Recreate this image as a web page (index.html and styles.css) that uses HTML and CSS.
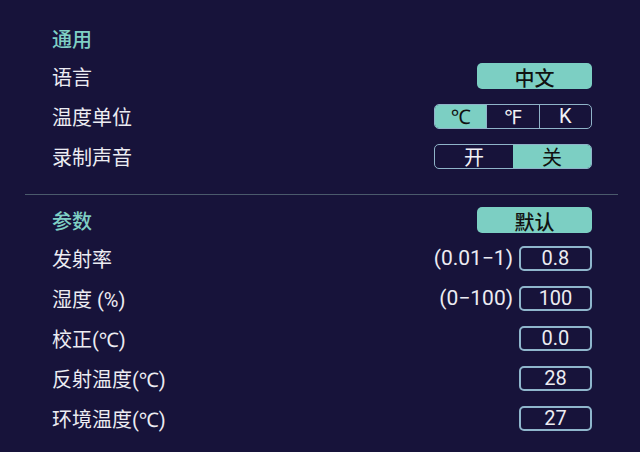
FILE: index.html
```html
<!DOCTYPE html>
<html lang="zh-CN">
<head>
    <meta charset="UTF-8">
    <meta name="viewport" content="width=device-width, initial-scale=1.0">
    <title>设置</title>
    <link rel="stylesheet" href="styles.css">
</head>
<body>

    <section class="group">
        <div class="row head">
            <span class="title">通用</span>
        </div>
        <div class="row">
            <span class="label">语言</span>
            <button class="pill">中文</button>
        </div>
        <div class="row">
            <span class="label">温度单位</span>
            <div class="seg">
                <span class="on">℃</span>
                <span>℉</span>
                <span>K</span>
            </div>
        </div>
        <div class="row">
            <span class="label">录制声音</span>
            <div class="seg two">
                <span>开</span>
                <span class="on">关</span>
            </div>
        </div>
    </section>

    <hr class="divider">

    <section class="group">
        <div class="row head">
            <span class="title">参数</span>
            <button class="pill">默认</button>
        </div>
        <div class="row">
            <span class="label">发射率</span>
            <div class="field">
                <span class="range">(0.01−1)</span>
                <span class="box">0.8</span>
            </div>
        </div>
        <div class="row">
            <span class="label">湿度 (%)</span>
            <div class="field">
                <span class="range">(0−100)</span>
                <span class="box">100</span>
            </div>
        </div>
        <div class="row">
            <span class="label">校正(℃)</span>
            <div class="field">
                <span class="box">0.0</span>
            </div>
        </div>
        <div class="row">
            <span class="label">反射温度(℃)</span>
            <div class="field">
                <span class="box">28</span>
            </div>
        </div>
        <div class="row">
            <span class="label">环境温度(℃)</span>
            <div class="field">
                <span class="box">27</span>
            </div>
        </div>
    </section>

</body>
</html>
```

FILE: styles.css
```css
body {
    margin: 0;
    background: #17133a;
    font-family: Roboto, "Noto Sans", "Noto Sans CJK SC", sans-serif;
    color: #ececf2;
    width: 640px;
    height: 452px;
    overflow: hidden;
    padding-top: 20px;
    box-sizing: border-box;
}

.group {
    padding: 0 48px 0 52px;
}

.row {
    height: 40px;
    display: flex;
    align-items: center;
    justify-content: space-between;
}

.row.head {
    height: 36px;
}

.title {
    color: #7fcfc4;
    font-size: 20px;
    font-weight: 500;
}

.label {
    font-size: 20px;
}

.pill {
    width: 115px;
    height: 26px;
    border: none;
    border-radius: 5px;
    background: #7ccfc3;
    color: #111;
    font-family: inherit;
    font-size: 20px;
    font-weight: 500;
    padding: 0;
}

.seg {
    display: flex;
    width: 158px;
    height: 25px;
    border: 1px solid #8fb3c8;
    border-radius: 5px;
    overflow: hidden;
    box-sizing: border-box;
}

.seg span {
    flex: 1;
    display: flex;
    align-items: center;
    justify-content: center;
    font-size: 20px;
    color: #f2f2f6;
}

.seg span + span {
    border-left: 1px solid #8fb3c8;
}

.seg .on {
    background: #7ccfc3;
    color: #111;
}

.seg.two span + span {
    border-left: none;
}

.divider {
    margin: 18px 22px 7px 25px;
    border: none;
    border-top: 1px solid #4b5a6c;
}

.field {
    display: flex;
    align-items: center;
    gap: 6px;
}

.range {
    font-size: 21px;
}

.box {
    width: 73px;
    height: 25px;
    border: 2px solid #8fb6cc;
    border-radius: 5px;
    box-sizing: border-box;
    display: flex;
    align-items: center;
    justify-content: center;
    font-size: 20px;
}
```
